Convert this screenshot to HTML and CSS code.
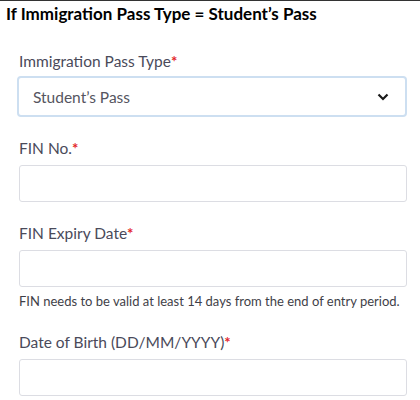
FILE: index.html
```
<!DOCTYPE html>
<html>
<head>
<meta charset="utf-8">
<link rel="stylesheet" href="styles.css">
</head>
<body>
<div class="page">
  <h1 class="title">If Immigration Pass Type = Student’s Pass</h1>
  <form class="form">
    <div class="field field-first">
      <label class="label">Immigration Pass Type<span class="req">*</span></label>
      <div class="select">
        <span class="select-text">Student’s Pass</span>
        <svg class="chev" width="12" height="8" viewBox="0 0 12 8"><path d="M1.5 1.5 L6 6 L10.5 1.5" fill="none" stroke="#1a1a1a" stroke-width="2.2"/></svg>
      </div>
    </div>
    <div class="field">
      <label class="label">FIN No.<span class="req">*</span></label>
      <div class="input"></div>
    </div>
    <div class="field">
      <label class="label">FIN Expiry Date<span class="req">*</span></label>
      <div class="input"></div>
      <p class="hint">FIN needs to be valid at least 14 days from the end of entry period.</p>
    </div>
    <div class="field">
      <label class="label">Date of Birth (DD/MM/YYYY)<span class="req">*</span></label>
      <div class="input"></div>
    </div>
  </form>
</div>
</body>
</html>
```
FILE: styles.css
```
html, body {
  margin: 0;
  padding: 0;
  background: #fff;
}
.page {
  width: 420px;
  height: 400px;
  border-top: 1px solid #333;
  overflow: hidden;
}
.title {
  margin: 0;
  padding: 3px 0 0 6px;
  font-family: Lato, "Open Sans", sans-serif;
  font-weight: 700;
  font-size: 17px;
  line-height: 20px;
  color: #000;
}
.form {
  padding: 0 13px 0 19px;
  font-family: Lato, sans-serif;
}
.field {
  display: flex;
  flex-direction: column;
}
.label {
  margin-top: 21px;
  font-size: 15.5px;
  line-height: 20px;
  color: #4a4a5a;
}
.field-first .label {
  margin-top: 27px;
}
.req {
  color: #e3262b;
  font-size: 15px;
  font-weight: 700;
}
.select {
  margin: 5px 0 0 -2px;
  height: 37px;
  border: 2px solid #cddff1;
  border-radius: 4px;
  display: flex;
  align-items: center;
  justify-content: space-between;
  padding: 0 16px 0 14px;
}
.select-text {
  font-size: 15.5px;
  color: #555560;
}
.chev {
  display: block;
}
.input {
  margin-top: 7px;
  height: 35px;
  border: 1px solid #dcdde3;
  border-radius: 3px;
}
.hint {
  margin: 6px 0 2px 0;
  font-size: 13px;
  line-height: 16px;
  color: #3f3f48;
}
```
